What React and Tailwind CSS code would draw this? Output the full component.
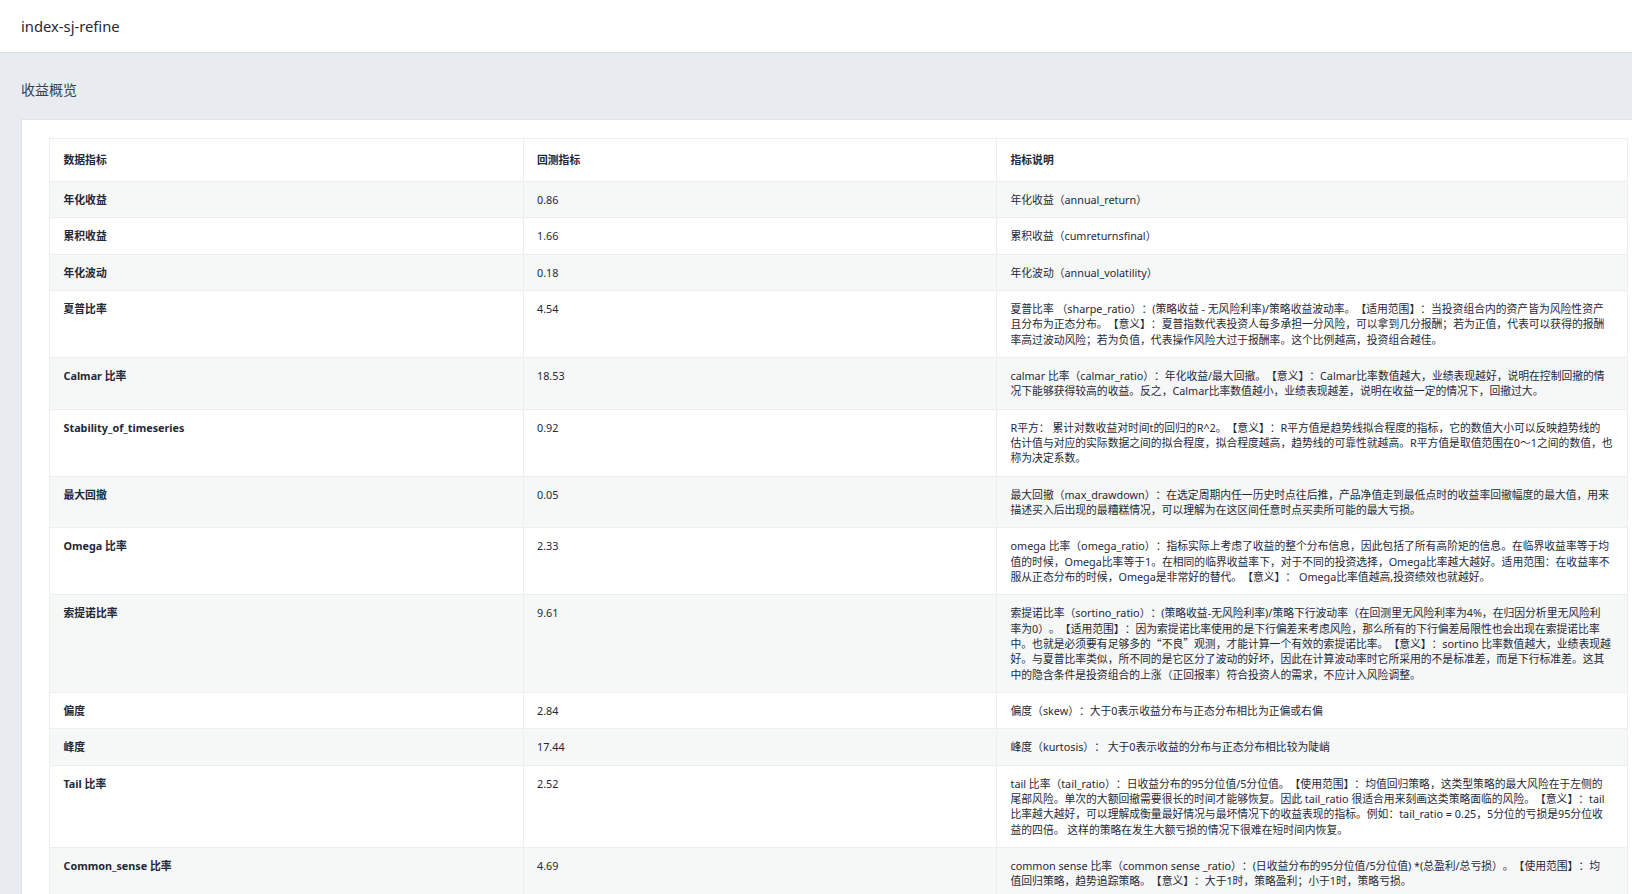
const rows = [
  { name: "年化收益", value: "0.86", note: "年化收益（annual_return）" },
  { name: "累积收益", value: "1.66", note: "累积收益（cumreturnsfinal）" },
  { name: "年化波动", value: "0.18", note: "年化波动（annual_volatility）" },
  {
    name: "夏普比率",
    value: "4.54",
    note: "夏普比率 （sharpe_ratio）：(策略收益 - 无风险利率)/策略收益波动率。【适用范围】：当投资组合内的资产皆为风险性资产\n且分布为正态分布。【意义】：夏普指数代表投资人每多承担一分风险，可以拿到几分报酬；若为正值，代表可以获得的报酬\n率高过波动风险；若为负值，代表操作风险大过于报酬率。这个比例越高，投资组合越佳。",
  },
  {
    name: "Calmar 比率",
    value: "18.53",
    note: "calmar 比率（calmar_ratio）：年化收益/最大回撤。【意义】：Calmar比率数值越大，业绩表现越好，说明在控制回撤的情\n况下能够获得较高的收益。反之，Calmar比率数值越小，业绩表现越差，说明在收益一定的情况下，回撤过大。",
  },
  {
    name: "Stability_of_timeseries",
    value: "0.92",
    note: "R平方： 累计对数收益对时间t的回归的R^2。【意义】：R平方值是趋势线拟合程度的指标，它的数值大小可以反映趋势线的\n估计值与对应的实际数据之间的拟合程度，拟合程度越高，趋势线的可靠性就越高。R平方值是取值范围在0～1之间的数值，也\n称为决定系数。",
  },
  {
    name: "最大回撤",
    value: "0.05",
    note: "最大回撤（max_drawdown）：在选定周期内任一历史时点往后推，产品净值走到最低点时的收益率回撤幅度的最大值，用来\n描述买入后出现的最糟糕情况，可以理解为在这区间任意时点买卖所可能的最大亏损。",
  },
  {
    name: "Omega 比率",
    value: "2.33",
    note: "omega 比率（omega_ratio）：指标实际上考虑了收益的整个分布信息，因此包括了所有高阶矩的信息。在临界收益率等于均\n值的时候，Omega比率等于1。在相同的临界收益率下，对于不同的投资选择，Omega比率越大越好。适用范围：在收益率不\n服从正态分布的时候，Omega是非常好的替代。【意义】： Omega比率值越高,投资绩效也就越好。",
  },
  {
    name: "索提诺比率",
    value: "9.61",
    note: (
      <>
        {"索提诺比率（sortino_ratio）：(策略收益-无风险利率)/策略下行波动率（在回测里无风险利率为4%，在归因分析里无风险利\n率为0）。【适用范围】：因为索提诺比率使用的是下行偏差来考虑风险，那么所有的下行偏差局限性也会出现在索提诺比率\n中。也就是必须要有足够多的"}
        <span className="font-['Noto_Sans_CJK_SC',sans-serif]">“不良”</span>
        {"观测，才能计算一个有效的索提诺比率。【意义】：sortino 比率数值越大，业绩表现越\n好。与夏普比率类似，所不同的是它区分了波动的好坏，因此在计算波动率时它所采用的不是标准差，而是下行标准差。这其\n中的隐含条件是投资组合的上涨（正回报率）符合投资人的需求，不应计入风险调整。"}
      </>
    ),
  },
  { name: "偏度", value: "2.84", note: "偏度（skew）：大于0表示收益分布与正态分布相比为正偏或右偏" },
  { name: "峰度", value: "17.44", note: "峰度（kurtosis）： 大于0表示收益的分布与正态分布相比较为陡峭" },
  {
    name: "Tail 比率",
    value: "2.52",
    note: "tail 比率（tail_ratio）：日收益分布的95分位值/5分位值。【使用范围】：均值回归策略，这类型策略的最大风险在于左侧的\n尾部风险。单次的大额回撤需要很长的时间才能够恢复。因此 tail_ratio 很适合用来刻画这类策略面临的风险。【意义】：tail\n比率越大越好，可以理解成衡量最好情况与最坏情况下的收益表现的指标。例如：tail_ratio = 0.25，5分位的亏损是95分位收\n益的四倍。 这样的策略在发生大额亏损的情况下很难在短时间内恢复。",
  },
  {
    name: "Common_sense 比率",
    value: "4.69",
    note: "common sense 比率（common sense _ratio）：(日收益分布的95分位值/5分位值) *(总盈利/总亏损）。【使用范围】：均\n值回归策略，趋势追踪策略。【意义】：大于1时，策略盈利；小于1时，策略亏损。",
  },
];

const cell = "border border-[#eceef2] pl-[13.5px] pr-[6px] py-[10px]";

export default function App() {
  return (
    <div className="h-[894px] overflow-hidden bg-[#e8ebef] font-['Noto_Sans','Noto_Sans_CJK_SC',sans-serif] text-[#1f2937] [text-spacing-trim:space-all]">
      <header className="flex h-[53px] items-center border-b border-[#d9dce1] bg-white pl-[21px] text-[14.75px]">
        index-sj-refine
      </header>

      <h2 className="pl-[21px] pt-[25px] pb-[18px] text-[14px] font-normal leading-[23px] text-[#374151]">收益概览</h2>

      <div className="w-[1640px] ml-[21px] border border-[#dfe2e6] bg-white pl-[27px] pt-[18px]">
        <table className="w-[1578px] table-fixed border-collapse text-[10.8px] leading-[15.33px]">
          <colgroup>
            <col className="w-[473.5px]" />
            <col className="w-[473.5px]" />
            <col className="w-[631px]" />
          </colgroup>
          <thead>
            <tr className="h-[43px] text-left">
              <th className={`${cell} font-bold align-middle`}>数据指标</th>
              <th className={`${cell} font-bold align-middle`}>回测指标</th>
              <th className={`${cell} font-bold align-middle`}>指标说明</th>
            </tr>
          </thead>
          <tbody>
            {rows.map((row, i) => (
              <tr key={row.name} className={i % 2 === 0 ? "bg-[#f6f7f7]" : "bg-white"}>
                <td className={`${cell} font-bold align-top`}>{row.name}</td>
                <td className={`${cell} align-top`}>{row.value}</td>
                <td className={`${cell} align-top whitespace-pre`}>{row.note}</td>
              </tr>
            ))}
          </tbody>
        </table>
      </div>
    </div>
  );
}
